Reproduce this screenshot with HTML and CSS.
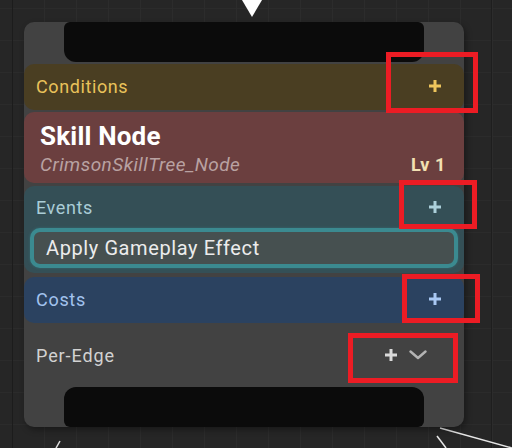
FILE: index.html
```html
<!DOCTYPE html>
<html>
<head>
<meta charset="utf-8">
<link rel="stylesheet" href="styles.css">
</head>
<body>
<div class="canvas">
  <svg class="wires" width="512" height="448" viewBox="0 0 512 448">
    <polygon points="242,0 262,0 252,17" fill="#ffffff"/>
    <line x1="56" y1="448" x2="60" y2="441" stroke="#e0e0e0" stroke-width="1.5"/>
    <line x1="440" y1="428" x2="512" y2="448" stroke="#e6e6e6" stroke-width="1.5"/>
    <line x1="437" y1="436" x2="446" y2="448" stroke="#e6e6e6" stroke-width="1.5"/>
  </svg>

  <div class="node">
    <div class="cap cap-top"></div>

    <div class="band band-cond">
      <span class="label label-cond">Conditions</span>
      <svg class="plus" viewBox="0 0 12 12"><rect x="4.5" y="0" width="3" height="12"/><rect x="0" y="4.5" width="12" height="3"/></svg>
    </div>

    <div class="band-title">
      <div class="title">Skill Node</div>
      <div class="subrow">
        <span class="subtitle">CrimsonSkillTree_Node</span>
        <span class="level">Lv 1</span>
      </div>
    </div>

    <div class="band-events">
      <div class="events-head">
        <span class="label label-events">Events</span>
        <svg class="plus plus-events" viewBox="0 0 12 12"><rect x="4.5" y="0" width="3" height="12"/><rect x="0" y="4.5" width="12" height="3"/></svg>
      </div>
      <div class="effect">Apply Gameplay Effect</div>
    </div>

    <div class="band band-costs">
      <span class="label label-costs">Costs</span>
      <svg class="plus plus-costs" viewBox="0 0 12 12"><rect x="4.5" y="0" width="3" height="12"/><rect x="0" y="4.5" width="12" height="3"/></svg>
    </div>

    <div class="edge-row">
      <span class="label label-edge">Per-Edge</span>
      <div class="edge-tools">
        <svg class="plus plus-edge" viewBox="0 0 12 12"><rect x="4.5" y="0" width="3" height="12"/><rect x="0" y="4.5" width="12" height="3"/></svg>
        <svg class="chev" viewBox="0 0 18 10"><polyline points="1.5,1.5 9,8 16.5,1.5" fill="none" stroke="#b4b4b4" stroke-width="2.4" stroke-linecap="round" stroke-linejoin="round"/></svg>
      </div>
    </div>

    <div class="cap cap-bottom"></div>
  </div>

  <div class="mark mark-1"></div>
  <div class="mark mark-2"></div>
  <div class="mark mark-3"></div>
  <div class="mark mark-4"></div>
</div>
</body>
</html>
```

FILE: styles.css
```css
html, body {
  margin: 0;
  padding: 0;
  background: #262626;
}

.canvas {
  position: relative;
  width: 512px;
  height: 448px;
  overflow: hidden;
  font-family: Roboto, "Liberation Sans", sans-serif;
  background-color: #262626;
  background-image:
    linear-gradient(to right, transparent 12px, #1c1c1c 12px, #1c1c1c 13px, transparent 13px),
    linear-gradient(to right, transparent 491px, #1e1e1e 491px, #1e1e1e 492px, transparent 492px),
    repeating-linear-gradient(to right, transparent 0, transparent 12px, #2c2c2c 12px, #2c2c2c 13px, transparent 13px, transparent 32px),
    repeating-linear-gradient(to bottom, transparent 0, transparent 8px, #2b2b2b 8px, #2b2b2b 9px, transparent 9px, transparent 32px);
}

.wires {
  position: absolute;
  left: 0;
  top: 0;
}

.node {
  position: absolute;
  left: 24px;
  top: 22px;
  width: 440px;
  height: 405px;
  background: #424242;
  border-radius: 10px;
  box-shadow: 2px 3px 6px rgba(0, 0, 0, 0.35);
  display: flex;
  flex-direction: column;
}

.cap {
  height: 40px;
  margin: 0 40px;
  background: #0b0b0b;
  flex: none;
}

.cap-top {
  border-radius: 6px 6px 12px 12px;
  margin-bottom: 2px;
}

.cap-bottom {
  border-radius: 12px 12px 6px 6px;
}

.band {
  height: 46px;
  border-radius: 10px;
  display: flex;
  align-items: center;
  justify-content: space-between;
  padding: 0 23px 2px 12px;
  box-sizing: border-box;
  flex: none;
}

.label {
  font-size: 18px;
  letter-spacing: 0.3px;
}

.band-cond {
  background: #4a3e22;
}

.label-cond {
  color: #e9c25a;
  letter-spacing: 0.6px;
}

.plus {
  width: 12px;
  height: 12px;
  fill: #eec55c;
  flex: none;
}

.band-title {
  margin-top: 2px;
  height: 71px;
  box-sizing: border-box;
  background: #6b3f3f;
  border-radius: 10px;
  padding: 9px 18px 0 16px;
  flex: none;
}

.title {
  font-size: 26px;
  font-weight: 700;
  line-height: 30px;
  color: #ffffff;
  letter-spacing: 0.2px;
}

.subrow {
  margin-top: 3px;
  display: flex;
  justify-content: space-between;
  align-items: baseline;
  line-height: 22px;
}

.subtitle {
  font-size: 19px;
  font-style: italic;
  color: #b9a2a2;
  letter-spacing: 0.45px;
}

.level {
  font-size: 18px;
  font-weight: 700;
  color: #f2e0b2;
  letter-spacing: 0.6px;
}

.band-events {
  margin-top: 3px;
  height: 87px;
  box-sizing: border-box;
  background: #344f56;
  border-radius: 10px;
  padding: 0 6px 5px 6px;
  flex: none;
}

.events-head {
  height: 42px;
  display: flex;
  align-items: center;
  justify-content: space-between;
  padding: 0 17px 0 6px;
}

.label-events {
  color: #aacdd6;
  letter-spacing: 0.6px;
}

.plus-events {
  fill: #acd0da;
}

.effect {
  height: 40px;
  box-sizing: border-box;
  border: 4px solid #3b8a90;
  border-radius: 10px;
  background: #465050;
  box-shadow: 0 0 3px rgba(60, 160, 170, 0.35);
  display: flex;
  align-items: center;
  padding-left: 12px;
  font-size: 20px;
  letter-spacing: 0.6px;
  color: #ececec;
}

.band-costs {
  margin-top: 4px;
  background: #2b4260;
}

.label-costs {
  color: #a2c3ee;
  letter-spacing: 0.7px;
}

.plus-costs {
  fill: #a9c8f3;
}

.edge-row {
  height: 64px;
  display: flex;
  align-items: center;
  justify-content: space-between;
  padding: 0 37px 0 12px;
  flex: none;
}

.label-edge {
  color: #d2d2d2;
  letter-spacing: 0.9px;
}

.edge-tools {
  display: flex;
  align-items: center;
  gap: 12px;
}

.plus-edge {
  fill: #dadada;
}

.chev {
  width: 18px;
  height: 10px;
  margin-top: -1px;
}

.mark {
  position: absolute;
  border: 5px solid #ec1c24;
  box-sizing: border-box;
}

.mark-1 { left: 386px; top: 52px; width: 92px; height: 61px; }
.mark-2 { left: 399px; top: 180px; width: 78px; height: 49px; }
.mark-3 { left: 402px; top: 274px; width: 78px; height: 49px; }
.mark-4 { left: 348px; top: 333px; width: 110px; height: 50px; }
```
